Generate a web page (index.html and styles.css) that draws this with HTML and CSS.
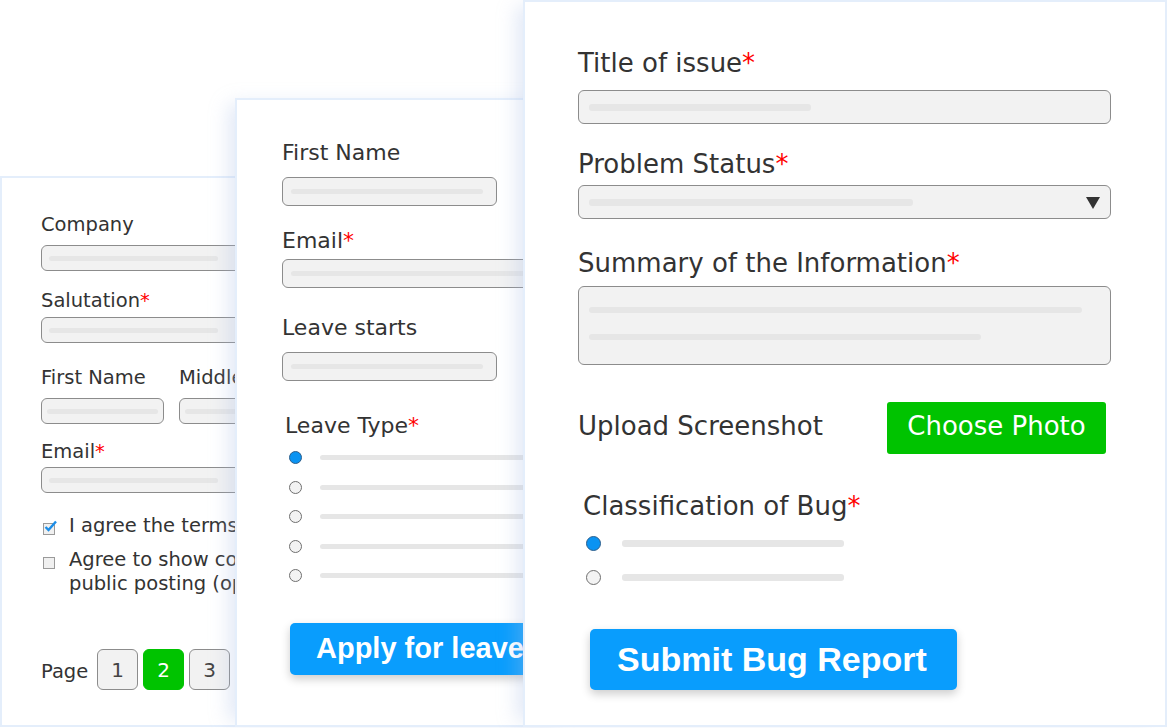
FILE: index.html
```html
<!DOCTYPE html>
<html>
<head lang="en">
    <meta charset="UTF-8">
    <title>Forms</title>
    <link rel="stylesheet" href="styles.css">
</head>
<body>
<main class="stage">
    <section class="card card-profile">
        <p class="label p-label">Company</p>
        <div class="box p-box p-wide"><span class="bar p-bar-wide"></span></div>
        <p class="label p-label p-gap">Salutation<span class="req">*</span></p>
        <div class="box p-box p-wide p-tight"><span class="bar p-bar-wide"></span></div>
        <div class="p-names">
            <div class="p-col">
                <p class="label p-label">First Name</p>
                <div class="box p-box p-short"><span class="bar p-bar-short"></span></div>
            </div>
            <div class="p-col">
                <p class="label p-label">Middle Name</p>
                <div class="box p-box p-short"><span class="bar p-bar-short"></span></div>
            </div>
        </div>
        <p class="label p-label p-email">Email<span class="req">*</span></p>
        <div class="box p-box p-wide p-email-box"><span class="bar p-bar-wide"></span></div>
        <div class="check check-first">
            <span class="tick">
                <svg class="tick-mark" width="15" height="15" viewBox="0 0 15 15"><path d="M2.5 8 L5.5 11 L13 2.5" fill="none" stroke="#1c8ee8" stroke-width="2.4"/></svg>
            </span>
            <p>I agree the terms and conditions</p>
        </div>
        <div class="check check-second">
            <span class="tick"></span>
            <p>Agree to show contact details for<br>public posting (optional)</p>
        </div>
        <div class="pager">
            <span class="pager-label">Page</span>
            <span class="page">1</span>
            <span class="page current">2</span>
            <span class="page">3</span>
        </div>
    </section>

    <section class="card card-leave">
        <p class="label l-label">First Name</p>
        <div class="box l-box"><span class="bar l-bar"></span></div>
        <p class="label l-label l-email">Email<span class="req">*</span></p>
        <div class="box l-box l-box-wide l-email-box"><span class="bar l-bar-wide"></span></div>
        <p class="label l-label l-starts">Leave starts</p>
        <div class="box l-box"><span class="bar l-bar"></span></div>
        <p class="label l-label l-type">Leave Type<span class="req">*</span></p>
        <ul class="options l-options">
            <li class="option"><span class="radio on"></span><span class="bar l-line"></span></li>
            <li class="option"><span class="radio"></span><span class="bar l-line"></span></li>
            <li class="option"><span class="radio"></span><span class="bar l-line"></span></li>
            <li class="option"><span class="radio"></span><span class="bar l-line"></span></li>
            <li class="option"><span class="radio"></span><span class="bar l-line"></span></li>
        </ul>
        <button class="btn-primary l-apply">Apply for leave</button>
    </section>

    <section class="card card-bug">
        <p class="label b-label">Title of issue<span class="req">*</span></p>
        <div class="box b-box"><span class="bar b-bar-title"></span></div>
        <p class="label b-label b-status">Problem Status<span class="req">*</span></p>
        <div class="box b-box b-select"><span class="bar b-bar-status"></span><span class="caret"></span></div>
        <p class="label b-label b-summary">Summary of the Information<span class="req">*</span></p>
        <div class="box b-box b-area"><span class="bar b-bar-long"></span><span class="bar b-bar-mid"></span></div>
        <div class="upload">
            <p class="label b-label upload-label">Upload Screenshot</p>
            <button class="btn-green">Choose Photo</button>
        </div>
        <p class="label b-label b-class">Classification of Bug<span class="req">*</span></p>
        <ul class="options b-options">
            <li class="option"><span class="radio on"></span><span class="bar b-line"></span></li>
            <li class="option"><span class="radio"></span><span class="bar b-line"></span></li>
        </ul>
        <button class="btn-primary b-submit">Submit Bug Report</button>
    </section>
</main>
</body>
</html>
```

FILE: styles.css
```css
*{
    margin: 0;
    padding: 0;
    box-sizing: border-box;
}
ul{
    list-style: none;
}
body{
    background: #fff;
    color: #333;
    font-family: "DejaVu Sans", "Liberation Sans", sans-serif;
}
.stage{
    position: relative;
    width: 1167px;
    height: 728px;
    overflow: hidden;
}

/* the three forms lie on top of each other like windows */
.card{
    position: absolute;
    background: #fff;
    border: 2px solid #e4eefb;
    overflow: hidden;
    display: flex;
    flex-direction: column;
    align-items: flex-start;
}
.card-leave,.card-bug{
    box-shadow: -12px 0 18px -6px rgba(170,190,230,.35);
}
.card-profile{
    left: 0;
    top: 176px;
    width: 320px;
    height: 551px;
    padding: 35px 0 0 39px;
}
.card-leave{
    left: 235px;
    top: 98px;
    width: 340px;
    height: 629px;
    padding: 40px 0 0 45px;
}
.card-bug{
    left: 523px;
    top: 0;
    width: 644px;
    height: 727px;
    padding: 46px 0 0 53px;
}

.label{
    white-space: nowrap;
}
.req{
    color: #f00;
}
.box{
    display: flex;
    align-items: center;
    background: #f2f2f2;
    border: 1px solid #8c8c8c;
    border-radius: 6px;
    flex-shrink: 0;
}
.bar{
    display: block;
    height: 5px;
    border-radius: 3px;
    background: #e6e6e6;
    flex-shrink: 0;
}

/* profile form */
.p-label{
    font-size: 19.5px;
    line-height: 24px;
}
.p-box{
    height: 26px;
    margin-top: 8px;
    padding-left: 7px;
}
.p-wide{
    width: 240px;
}
.p-tight{
    margin-top: 4px;
}
.p-bar-wide{
    width: 169px;
}
.p-short{
    width: 123px;
    padding-left: 5px;
}
.p-bar-short{
    width: 111px;
}
.p-gap{
    margin-top: 18px;
}
.p-names{
    display: flex;
    gap: 15px;
    margin-top: 23px;
}
.p-email{
    margin-top: 16px;
}
.p-email-box{
    margin-top: 3px;
}
.check{
    display: flex;
    align-items: flex-start;
    gap: 14px;
    font-size: 19.5px;
    line-height: 24px;
    white-space: nowrap;
}
.check-first{
    margin-top: 21px;
}
.check-second{
    margin-top: 10px;
}
.tick{
    position: relative;
    width: 12px;
    height: 12px;
    margin: 9px 0 0 2px;
    border: 1px solid #9a9a9a;
    background: #f0f0f0;
    flex-shrink: 0;
}
.tick-mark{
    position: absolute;
    left: -1px;
    top: -5px;
}
.pager{
    display: flex;
    align-items: center;
    gap: 5px;
    margin-top: 53px;
}
.pager-label{
    font-size: 19.5px;
    line-height: 24px;
    padding-top: 4px;
    margin-right: 4px;
}
.page{
    width: 41px;
    height: 41px;
    display: flex;
    align-items: center;
    justify-content: center;
    border: 1px solid #8c8c8c;
    border-radius: 6px;
    background: #f2f2f2;
    font-size: 20px;
    color: #444;
}
.page.current{
    background: #00c300;
    border-color: #00c300;
    color: #fff;
}

/* leave form */
.l-label{
    font-size: 22px;
    line-height: 26px;
}
.l-box{
    width: 215px;
    height: 29px;
    margin-top: 11px;
    padding-left: 8px;
}
.l-bar{
    width: 192px;
}
.l-box-wide{
    width: 300px;
}
.l-bar-wide{
    width: 270px;
}
.l-email{
    margin-top: 22px;
}
.l-email-box{
    margin-top: 5px;
}
.l-starts{
    margin-top: 27px;
}
.l-type{
    margin: 32px 0 0 3px;
}
.option{
    display: flex;
    align-items: center;
}
.radio{
    border: 1px solid #6f6f6f;
    border-radius: 50%;
    background: #f3f3f3;
    flex-shrink: 0;
}
.radio.on{
    background: #0a93f2;
    border-color: #2e5f8c;
}
.l-options{
    margin-top: 4px;
}
.l-options .option{
    height: 29.5px;
}
.l-options .radio{
    width: 13px;
    height: 13px;
    margin-left: 7px;
}
.l-line{
    width: 260px;
    margin-left: 18px;
}
.btn-primary{
    border: none;
    border-radius: 5px;
    background: #099dfd;
    color: #fff;
    font-family: "Liberation Sans", Arial, sans-serif;
    font-weight: bold;
    text-align: left;
    white-space: nowrap;
    box-shadow: 0 4px 10px rgba(0,0,0,.2);
    flex-shrink: 0;
}
.l-apply{
    height: 52px;
    margin: 32px 0 0 8px;
    padding: 0 26px;
    font-size: 29px;
}

/* bug report form */
.b-label{
    font-size: 26px;
    line-height: 30px;
}
.b-box{
    width: 533px;
    height: 34px;
    margin-top: 12px;
    padding: 0 10px;
}
.b-bar-title{
    width: 222px;
    height: 7px;
}
.b-status{
    margin-top: 25px;
}
.b-select{
    margin-top: 6px;
    justify-content: space-between;
}
.b-bar-status{
    width: 324px;
    height: 7px;
}
.caret{
    width: 0;
    height: 0;
    border-left: 7px solid transparent;
    border-right: 7px solid transparent;
    border-top: 12px solid #333;
    margin-top: 2px;
}
.b-summary{
    margin-top: 29px;
}
.b-area{
    height: 79px;
    margin-top: 8px;
    flex-direction: column;
    align-items: flex-start;
    gap: 21px;
    padding-top: 20px;
}
.b-area .bar{
    height: 6px;
}
.b-bar-long{
    width: 493px;
}
.b-bar-mid{
    width: 392px;
}
.upload{
    display: flex;
    margin-top: 37px;
}
.upload-label{
    width: 309px;
    line-height: 48px;
}
.btn-green{
    width: 219px;
    height: 52px;
    padding-bottom: 4px;
    border: none;
    border-radius: 3px;
    background: #00c300;
    color: #fff;
    font-family: "DejaVu Sans", sans-serif;
    font-size: 26px;
    line-height: 48px;
}
.b-class{
    margin: 37px 0 0 5px;
}
.b-options{
    margin-top: 5px;
}
.b-options .option{
    height: 34px;
}
.b-options .radio{
    width: 15px;
    height: 15px;
    margin-left: 8px;
}
.b-line{
    width: 222px;
    height: 7px;
    margin-left: 21px;
}
.b-submit{
    width: 367px;
    height: 61px;
    margin: 35px 0 0 12px;
    padding-left: 27px;
    font-size: 34px;
}
```
